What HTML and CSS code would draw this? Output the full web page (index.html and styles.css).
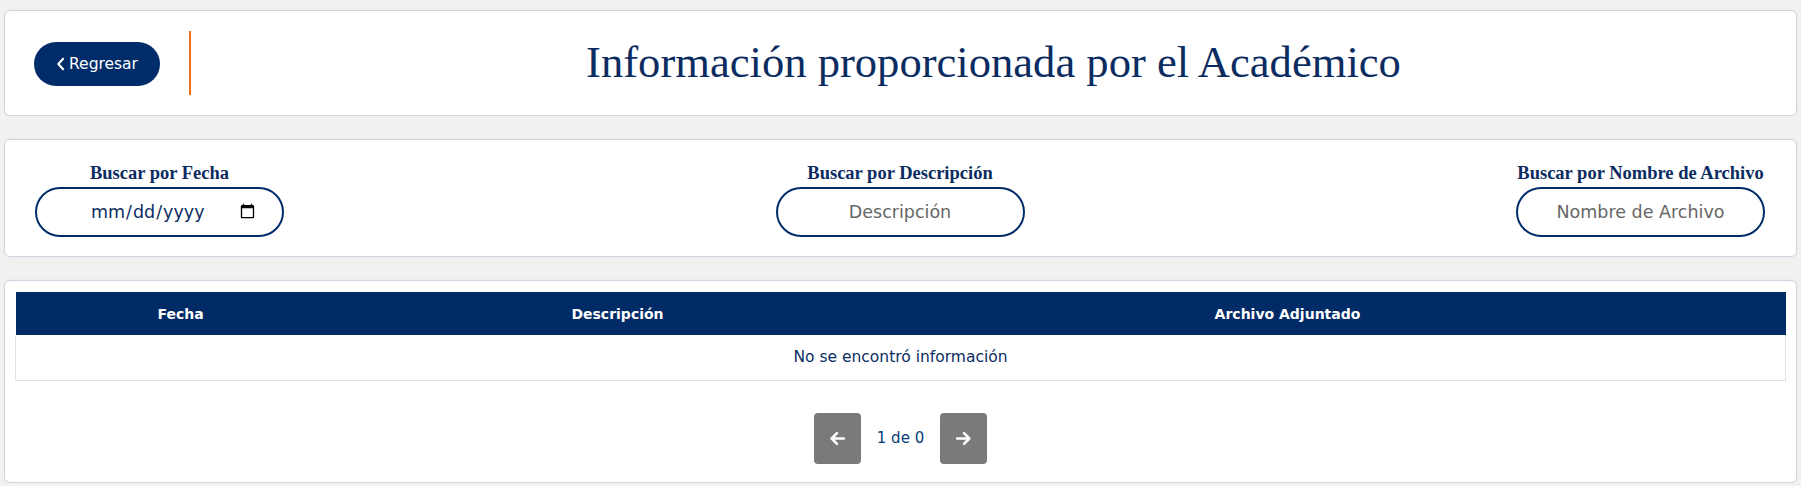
FILE: index.html
```html
<!DOCTYPE html>
<html lang="es">
<head>
<meta charset="utf-8">
<title>Información proporcionada por el Académico</title>
<link rel="stylesheet" href="styles.css">
</head>
<body>
<div class="page">
  <section class="card header-card">
    <button class="btn-back" type="button">
      <svg class="chev" viewBox="0 0 10 16" width="9" height="14" aria-hidden="true"><path d="M8 2 L2.5 8 L8 14" fill="none" stroke="#fff" stroke-width="2.4" stroke-linecap="round" stroke-linejoin="round"/></svg>
      <span>Regresar</span>
    </button>
    <div class="divider"></div>
    <h1 class="title">Información proporcionada por el Académico</h1>
  </section>

  <section class="card filter-card">
    <div class="field">
      <label class="field-label" for="f-fecha">Buscar por Fecha</label>
      <input id="f-fecha" class="pill-input date-input" type="date">
    </div>
    <div class="field">
      <label class="field-label" for="f-desc">Buscar por Descripción</label>
      <input id="f-desc" class="pill-input" type="text" placeholder="Descripción">
    </div>
    <div class="field">
      <label class="field-label" for="f-nom">Buscar por Nombre de Archivo</label>
      <input id="f-nom" class="pill-input" type="text" placeholder="Nombre de Archivo">
    </div>
  </section>

  <section class="card table-card">
    <table class="data-table">
      <thead>
        <tr>
          <th class="col-fecha">Fecha</th>
          <th class="col-desc">Descripción</th>
          <th class="col-arch">Archivo Adjuntado</th>
          <th class="col-extra"></th>
        </tr>
      </thead>
      <tbody>
        <tr><td colspan="4" class="empty">No se encontró información</td></tr>
      </tbody>
    </table>
    <div class="pager">
      <button class="pg-btn" type="button" aria-label="Anterior">
        <svg viewBox="0 0 16 16" width="17" height="17"><path d="M14 8H2.5 M7.5 3 L2.5 8 L7.5 13" fill="none" stroke="#fff" stroke-width="2.4" stroke-linecap="round" stroke-linejoin="round"/></svg>
      </button>
      <span class="pg-text">1 de 0</span>
      <button class="pg-btn" type="button" aria-label="Siguiente">
        <svg viewBox="0 0 16 16" width="17" height="17"><path d="M2 8H13.5 M8.5 3 L13.5 8 L8.5 13" fill="none" stroke="#fff" stroke-width="2.4" stroke-linecap="round" stroke-linejoin="round"/></svg>
      </button>
    </div>
  </section>
</div>
</body>
</html>
```
FILE: styles.css
```css
* { box-sizing: border-box; }
html, body { margin: 0; }
body {
  background: #f1f1f1;
  font-family: "DejaVu Sans", "Liberation Sans", sans-serif;
  color: #0a2d62;
}
.page {
  padding: 10px 4px 0 4px;
  display: flex;
  flex-direction: column;
  gap: 23px;
}
.card {
  background: #fff;
  border: 1.5px solid #cdd6e2;
  border-radius: 6px;
  box-shadow: 0 0 3px rgba(0,0,0,0.05);
}
.header-card {
  height: 106px;
  display: flex;
  align-items: center;
  padding: 0 0 0 29px;
}
.btn-back {
  width: 126px;
  height: 44px;
  border: none;
  border-radius: 22px;
  background: #002d6a;
  color: #fff;
  font-family: "DejaVu Sans", sans-serif;
  font-size: 15.5px;
  display: flex;
  align-items: center;
  justify-content: center;
  gap: 4px;
  padding: 0;
  margin-top: 2px;
}
.divider {
  width: 2px;
  height: 64px;
  background: #f26c13;
  margin-left: 29px;
}
.title {
  flex: 1;
  margin: 0 0 2px 0;
  text-align: center;
  font-family: "Liberation Serif", serif;
  font-weight: 400;
  font-size: 44.6px;
  color: #0b2c61;
}
.filter-card {
  height: 118px;
  display: flex;
  justify-content: space-between;
  align-items: flex-start;
  padding: 23px 31px 0 30px;
}
.field {
  width: 249px;
  display: flex;
  flex-direction: column;
  align-items: center;
  gap: 3px;
}
.field-label {
  font-family: "Liberation Serif", serif;
  font-weight: 700;
  font-size: 18.5px;
  line-height: 21px;
  color: #0b2c61;
  white-space: nowrap;
}
.pill-input {
  width: 249px;
  height: 50px;
  border: 2px solid #002d6a;
  border-radius: 25px;
  background: #fff;
  text-align: center;
  font-family: "DejaVu Sans", sans-serif;
  font-size: 17.5px;
  color: #0a2d62;
  padding: 0 20px;
  outline: none;
}
.date-input { padding: 0 24px 0 22px; }
.pill-input::placeholder { color: #666; }
.table-card {
  height: 203px;
  padding: 11px 10px 0 10px;
  display: flex;
  flex-direction: column;
  align-items: center;
}
.data-table {
  width: 100%;
  border-collapse: collapse;
  font-family: "DejaVu Sans", sans-serif;
}
.data-table th {
  background: #012b67;
  color: #fff;
  height: 43px;
  font-size: 14px;
  font-weight: 700;
  text-align: center;
  padding: 0;
}
.col-fecha { width: 330px; }
.col-desc { width: 544px; }
.col-arch { width: 796px; }
.data-table td {
  height: 45px;
  border: 1px solid #dde2e8;
  border-top: none;
  text-align: center;
  font-size: 15.5px;
  color: #0a2d62;
}
.pager {
  margin-top: 32px;
  display: flex;
  align-items: center;
  gap: 16px;
}
.pg-btn {
  width: 47px;
  height: 51px;
  border: none;
  border-radius: 4px;
  background: #7a7a7a;
  display: flex;
  align-items: center;
  justify-content: center;
  padding: 0;
}
.pg-text {
  font-size: 15px;
  color: #0a3d7a;
}
```
